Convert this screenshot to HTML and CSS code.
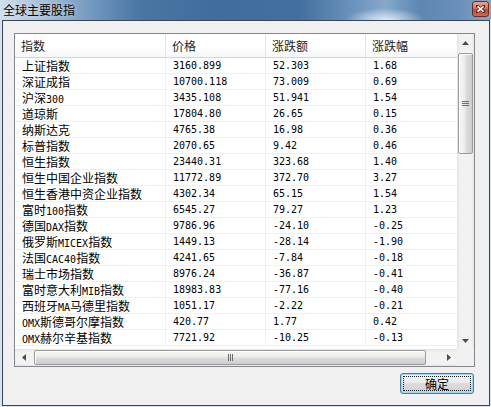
FILE: index.html
```html
<!DOCTYPE html>
<html lang="zh-CN">
<head>
<meta charset="utf-8">
<title>全球主要股指</title>
<link rel="stylesheet" href="styles.css">
</head>
<body>
<div class="window">
  <div class="titlebar">
    <span class="title">全球主要股指</span>
    <div class="close">
      <svg width="9" height="8" viewBox="0 0 9 8"><path d="M1 1 L8 7 M8 1 L1 7" stroke="#5a2015" stroke-width="3" stroke-linecap="square"/><path d="M1.5 1.3 L7.5 6.7 M7.5 1.3 L1.5 6.7" stroke="#fff" stroke-width="1.6"/></svg>
    </div>
  </div>
  <div class="client">
    <div class="listview">
      <div class="lv-content">
        <div class="lv-grid">
          <div class="hd">指数</div><div class="hd">价格</div><div class="hd">涨跌额</div><div class="hd">涨跌幅</div>
          <div class="c">上证指数</div><div class="c n">3160.899</div><div class="c n">52.303</div><div class="c n">1.68</div>
          <div class="c">深证成指</div><div class="c n">10700.118</div><div class="c n">73.009</div><div class="c n">0.69</div>
          <div class="c">沪深<span class="en">300</span></div><div class="c n">3435.108</div><div class="c n">51.941</div><div class="c n">1.54</div>
          <div class="c">道琼斯</div><div class="c n">17804.80</div><div class="c n">26.65</div><div class="c n">0.15</div>
          <div class="c">纳斯达克</div><div class="c n">4765.38</div><div class="c n">16.98</div><div class="c n">0.36</div>
          <div class="c">标普指数</div><div class="c n">2070.65</div><div class="c n">9.42</div><div class="c n">0.46</div>
          <div class="c">恒生指数</div><div class="c n">23440.31</div><div class="c n">323.68</div><div class="c n">1.40</div>
          <div class="c">恒生中国企业指数</div><div class="c n">11772.89</div><div class="c n">372.70</div><div class="c n">3.27</div>
          <div class="c">恒生香港中资企业指数</div><div class="c n">4302.34</div><div class="c n">65.15</div><div class="c n">1.54</div>
          <div class="c">富时<span class="en">100</span>指数</div><div class="c n">6545.27</div><div class="c n">79.27</div><div class="c n">1.23</div>
          <div class="c">德国<span class="en">DAX</span>指数</div><div class="c n">9786.96</div><div class="c n">-24.10</div><div class="c n">-0.25</div>
          <div class="c">俄罗斯<span class="en">MICEX</span>指数</div><div class="c n">1449.13</div><div class="c n">-28.14</div><div class="c n">-1.90</div>
          <div class="c">法国<span class="en">CAC40</span>指数</div><div class="c n">4241.65</div><div class="c n">-7.84</div><div class="c n">-0.18</div>
          <div class="c">瑞士市场指数</div><div class="c n">8976.24</div><div class="c n">-36.87</div><div class="c n">-0.41</div>
          <div class="c">富时意大利<span class="en">MIB</span>指数</div><div class="c n">18983.83</div><div class="c n">-77.16</div><div class="c n">-0.40</div>
          <div class="c">西班牙<span class="en">MA</span>马德里指数</div><div class="c n">1051.17</div><div class="c n">-2.22</div><div class="c n">-0.21</div>
          <div class="c"><span class="en">OMX</span>斯德哥尔摩指数</div><div class="c n">420.77</div><div class="c n">1.77</div><div class="c n">0.42</div>
          <div class="c"><span class="en">OMX</span>赫尔辛基指数</div><div class="c n">7721.92</div><div class="c n">-10.25</div><div class="c n">-0.13</div>
        </div>
      </div>
      <div class="vscroll">
        <div class="sb-btn"><svg width="7" height="4" viewBox="0 0 7 4"><path d="M3.5 0 L7 4 L0 4 Z" fill="#4d4d4d"/></svg></div>
        <div class="sb-track-v">
          <div class="thumb-v">
            <svg width="7" height="5" viewBox="0 0 7 5"><path d="M0 0.5 H7 M0 2.5 H7 M0 4.5 H7" stroke="#6d6d6d" stroke-width="1"/></svg>
          </div>
        </div>
        <div class="sb-btn"><svg width="7" height="4" viewBox="0 0 7 4"><path d="M0 0 L7 0 L3.5 4 Z" fill="#4d4d4d"/></svg></div>
      </div>
      <div class="hscroll">
        <div class="sb-btn"><svg width="4" height="7" viewBox="0 0 4 7"><path d="M4 0 L4 7 L0 3.5 Z" fill="#4d4d4d"/></svg></div>
        <div class="sb-track-h">
          <div class="thumb-h">
            <svg width="5" height="7" viewBox="0 0 5 7"><path d="M0.5 0 V7 M2.5 0 V7 M4.5 0 V7" stroke="#6d6d6d" stroke-width="1"/></svg>
          </div>
        </div>
        <div class="sb-btn"><svg width="4" height="7" viewBox="0 0 4 7"><path d="M0 0 L4 3.5 L0 7 Z" fill="#4d4d4d"/></svg></div>
      </div>
      <div class="corner"></div>
    </div>
    <div class="btn-row">
      <button class="btn"><span class="focus">确定</span></button>
    </div>
  </div>
</div>
</body>
</html>
```

FILE: styles.css
```css
html, body {
  margin: 0;
  padding: 0;
}
body {
  width: 491px;
  height: 407px;
  overflow: hidden;
  background: #d8e3ee;
  font-family: "Noto Sans CJK SC", "Liberation Sans", sans-serif;
  font-size: 12px;
  color: #000;
}
.window {
  width: 491px;
  height: 407px;
  display: flex;
  flex-direction: column;
}
.titlebar {
  height: 20px;
  display: flex;
  align-items: center;
  justify-content: space-between;
  padding: 0 2px 0 3px;
  background:
    radial-gradient(ellipse 40px 12px at 385px 20px, rgba(235,245,255,0.85), rgba(235,245,255,0) 100%),
    linear-gradient(to right, #d0dfec 0px, #a9c2da 40px, #6a92ba 100px, #4a76a4 140px, #3f6c9b 220px, #44709f 300px, #7097c0 360px, #86a8cb 385px, #5d86b1 420px, #6a90b9 460px, #86a7c9 491px);
}
.title {
  font-size: 12px;
  line-height: 20px;
  color: #000;
  text-shadow: 0 0 4px rgba(255,255,255,0.6);
}
.close {
  width: 17px;
  height: 16px;
  margin-top: -2px;
  box-sizing: border-box;
  border: 1px solid #6e2a1e;
  border-radius: 3px;
  background: linear-gradient(to bottom, #e6a593 0%, #d7745c 45%, #c4472e 55%, #cf6a4f 100%);
  display: flex;
  align-items: center;
  justify-content: center;
}
.client {
  flex: 1;
  margin: 0 1px 1px 2px;
  border: 1px solid #3c4652;
  background: #f0f0f0;
  padding: 12px 14px 0 11px;
  display: flex;
  flex-direction: column;
}
.listview {
  width: 461px;
  height: 334px;
  box-sizing: border-box;
  border: 1px solid #828790;
  background: #fff;
  display: grid;
  grid-template-columns: 442px 17px;
  grid-template-rows: 315px 17px;
}
.lv-content {
  overflow: hidden;
  background: #fff;
}
.lv-grid {
  display: grid;
  grid-template-columns: 151px 100px 100px 100px;
  grid-template-rows: 24px;
  grid-auto-rows: 16px;
  width: 451px;
}
.hd {
  box-sizing: border-box;
  border-right: 1px solid #e3e5e8;
  border-bottom: 1px solid #d5d5d5;
  background: linear-gradient(to bottom, #ffffff 0%, #ffffff 55%, #f6f7f8 100%);
  padding-left: 6px;
  line-height: 24px;
  white-space: nowrap;
  color: #1e1e1e;
}
.c {
  box-sizing: border-box;
  border-right: 1px solid #f0f0f0;
  border-bottom: 1px solid #f0f0f0;
  padding-left: 7px;
  line-height: 16px;
  height: 16px;
  white-space: nowrap;
  overflow: hidden;
}
.n, .en {
  font-family: "DejaVu Sans Mono", "Liberation Mono", monospace;
  font-size: 10px;
}
.vscroll {
  display: flex;
  flex-direction: column;
  background: linear-gradient(to right, #e4e4e4 0, #f1f1f1 3px, #f3f3f3 14px, #e8e8e8 17px);
}
.sb-btn {
  flex: 0 0 17px;
  display: flex;
  align-items: center;
  justify-content: center;
}
.vscroll .sb-btn {
  height: 17px;
}
.sb-track-v {
  flex: 1;
  padding: 2px 1px 0 1px;
}
.thumb-v {
  height: 101px;
  box-sizing: border-box;
  border: 1px solid #9b9b9b;
  border-radius: 2px;
  background: linear-gradient(to right, #f6f6f6 0%, #ececec 45%, #dcdcdc 55%, #cdcdcd 100%);
  box-shadow: inset 1px 1px 0 #ffffff;
  display: flex;
  align-items: center;
  justify-content: center;
}
.hscroll {
  display: flex;
  background: linear-gradient(to bottom, #e4e4e4 0, #f1f1f1 3px, #f3f3f3 14px, #e8e8e8 17px);
}
.hscroll .sb-btn {
  width: 17px;
}
.sb-track-h {
  flex: 1;
  padding: 1px 0 0 2px;
}
.thumb-h {
  width: 392px;
  height: 15px;
  box-sizing: border-box;
  border: 1px solid #9b9b9b;
  border-radius: 2px;
  background: linear-gradient(to bottom, #f6f6f6 0%, #ececec 45%, #dcdcdc 55%, #cdcdcd 100%);
  box-shadow: inset 1px 1px 0 #ffffff;
  display: flex;
  align-items: center;
  justify-content: center;
}
.corner {
  background: #f0f0f0;
}
.btn-row {
  display: flex;
  justify-content: flex-end;
  margin-top: 6px;
  padding-right: 1px;
}
.btn {
  width: 74px;
  height: 21px;
  box-sizing: border-box;
  border: 1px solid #3c7fb1;
  border-radius: 3px;
  background: linear-gradient(to bottom, #f2f2f2 0%, #ebebeb 50%, #dddddd 50%, #cfcfcf 100%);
  box-shadow: inset 0 0 0 1px #9ed8f6;
  padding: 2px;
  margin: 0;
  font-family: "Noto Sans CJK SC", sans-serif;
  font-size: 12px;
  color: #000;
  display: flex;
}
.focus {
  flex: 1;
  border: 1px dotted #1a1a1a;
  line-height: 13px;
  text-align: center;
}
```
